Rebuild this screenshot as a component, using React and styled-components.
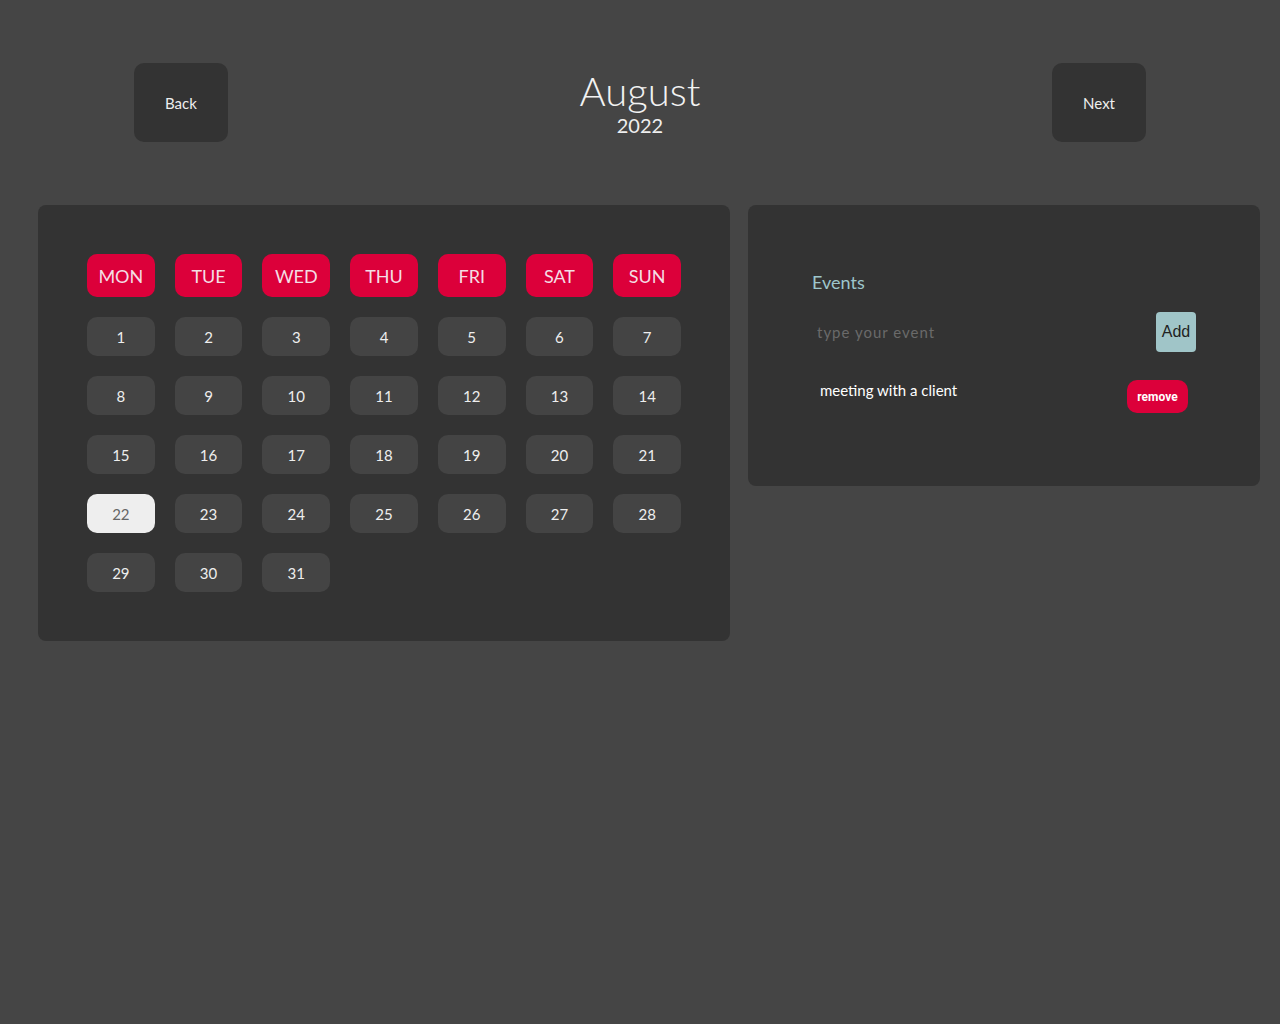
import { useState } from "react"
import styled, { createGlobalStyle } from "styled-components"

const GlobalStyle = createGlobalStyle`
    body{
        margin:0;
        background:#454545;
        font-family: 'Lato', 'Noto Sans', sans-serif;
        color:#eee;
    }
`

export default function App(){
    const days = ["MON","TUE","WED","THU","FRI","SAT","SUN"]
    const dates = Array.from({length:31}, (_, i)=> i + 1)
    const [selected, setSelected] = useState(22)
    const [events, setEvents] = useState(["meeting with a client"])
    const [text, setText] = useState("")

    function addEvent(){
        if(text.length < 1) return
        setEvents([...events, text])
        setText("")
    }

    return(
        <>
        <GlobalStyle/>
        <Header>
            <NavButton>Back</NavButton>
            <Title>
                <h1>August</h1>
                <span>2022</span>
            </Title>
            <NavButton>Next</NavButton>
        </Header>
        <Main>
            <Calendar>
                <Grid>
                    {days.map((day)=>(
                        <DayName key={day}>{day}</DayName>
                    ))}
                    {dates.map((d)=>(
                        <DayCell key={d} active={d === selected} onClick={()=>setSelected(d)}>{d}</DayCell>
                    ))}
                </Grid>
            </Calendar>
            <Events>
                <h2>Events</h2>
                <InputRow>
                    <Input placeholder="type your event" value={text} onChange={(e)=>setText(e.target.value)}/>
                    <Add onClick={addEvent}>Add</Add>
                </InputRow>
                {events.map((ev, i)=>(
                    <EventRow key={i}>
                        <p>{ev}</p>
                        <Remove onClick={()=>setEvents(events.filter((_, j)=> j !== i))}>remove</Remove>
                    </EventRow>
                ))}
            </Events>
        </Main>
        </>
    )
}

const Header = styled.div`
    display:flex;
    justify-content:space-between;
    align-items:center;
    padding: 63px 134px 0;
    margin-bottom:63px;
`
const NavButton = styled.button`
    height:79px;
    padding:0 31px;
    background:#333;
    color:#eee;
    border:none;
    border-radius:10px;
    font-family: 'Lato', 'Noto Sans', sans-serif;
    font-size:15px;
`
const Title = styled.div`
    display:flex;
    flex-direction:column;
    align-items:center;
    h1{
        margin:0;
        font-size:40px;
        font-weight:300;
        line-height:44px;
        color:#f2f2f2;
    }
    span{
        font-size:20px;
        line-height:24px;
        color:#eee;
    }
`
const Main = styled.div`
    display:flex;
    align-items:flex-start;
    gap:18px;
    padding: 0 20px 0 38px;
`
const Calendar = styled.div`
    width:692px;
    box-sizing:border-box;
    padding:49px;
    background:#333;
    border-radius:8px;
`
const Grid = styled.div`
    display:grid;
    grid-template-columns: repeat(7, 1fr);
    gap:20px;
`
const DayName = styled.div`
    height:43px;
    display:flex;
    justify-content:center;
    align-items:center;
    background:#dc003a;
    color:#f4dde4;
    border-radius:10px;
    font-size:18px;
`
const DayCell = styled.div`
    height:39px;
    display:flex;
    justify-content:center;
    align-items:center;
    background:${(p)=> p.active ? "#eeeeee" : "#444"};
    color:${(p)=> p.active ? "#666" : "#eee"};
    border-radius:10px;
    font-size:15px;
    cursor:pointer;
`
const Events = styled.div`
    flex:1;
    padding:56px 64px 73px;
    background:#333;
    border-radius:8px;
    h2{
        margin:10px 0 19px;
        font-size:18px;
        font-weight:400;
        color:#9ec6cc;
    }
`
const InputRow = styled.div`
    display:flex;
    align-items:center;
    justify-content:space-between;
`
const Input = styled.input`
    flex:1;
    height:40px;
    padding:0 5px;
    background:transparent;
    border:none;
    outline:none;
    color:#eee;
    font-size:15px;
    letter-spacing:1px;
    font-family: 'Lato', 'Noto Sans', sans-serif;
    &::placeholder{
        color:#6a6a6a;
    }
`
const Add = styled.button`
    width:40px;
    height:40px;
    padding:0;
    background:#a0c5c8;
    color:#222;
    border:none;
    border-radius:4px;
    font-size:16px;
    font-family: 'Liberation Sans', Arial, sans-serif;
`
const EventRow = styled.div`
    display:flex;
    justify-content:space-between;
    align-items:flex-start;
    margin-top:28px;
    padding:0 8px;
    p{
        margin:1px 0 0;
        font-size:15px;
        color:#fff;
    }
`
const Remove = styled.button`
    width:61px;
    height:33px;
    padding:0;
    box-sizing:border-box;
    background:#dc003a;
    color:#fff;
    border:none;
    border-radius:10px;
    font-size:12px;
    font-weight:bold;
    font-family: 'Roboto', 'Liberation Sans', sans-serif;
`
